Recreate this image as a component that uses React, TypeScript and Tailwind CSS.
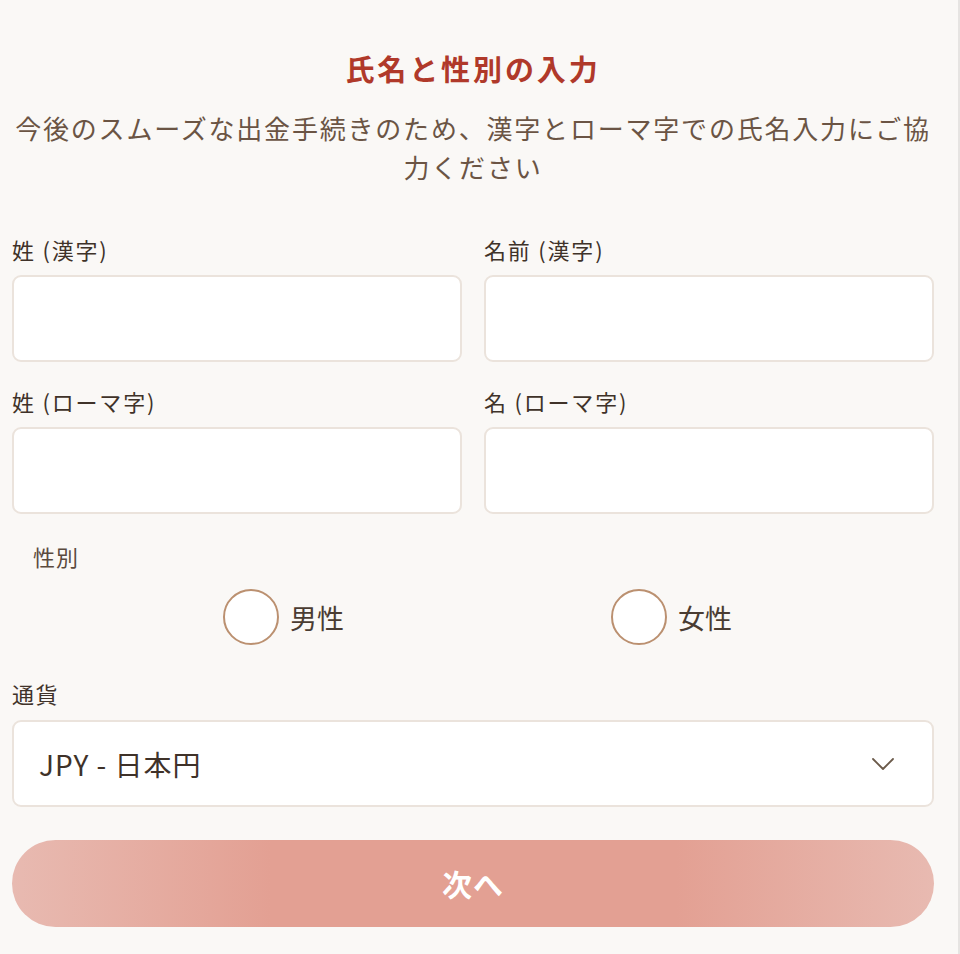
type Field = {
  label: string
}

const nameFields: Field[][] = [
  [{ label: '姓 (漢字)' }, { label: '名前 (漢字)' }],
  [{ label: '姓 (ローマ字)' }, { label: '名 (ローマ字)' }],
]

const font = { fontFamily: '"Noto Sans CJK JP", "Noto Sans", sans-serif' }

function Radio({ label }: { label: string }) {
  return (
    <label className="flex items-center gap-[11px]">
      <span className="block h-[56px] w-[56px] rounded-full border-2 border-[#bb9070] bg-white" />
      <span className="text-[27px] leading-none text-[#4a3c32]">{label}</span>
    </label>
  )
}

export default function App() {
  return (
    <div
      style={font}
      className="min-h-[954px] w-full border-r-2 border-[#e6e4e2] bg-[#faf8f6] pb-[27px] pl-[12px] pr-[24px] pt-[48px]"
    >
      <h1 className="text-center text-[29px] font-bold leading-[40px] tracking-[0.1em] text-[#b0392a]">
        氏名と性別の入力
      </h1>
      <p className="mt-[20px] text-center text-[26px] leading-[39px] tracking-[1.8px] text-[#6b5444]">
        今後のスムーズな出金手続きのため、漢字とローマ字での氏名入力にご協力ください
      </p>

      <div className="mt-[48px] flex flex-col gap-[24px]">
        {nameFields.map((row, i) => (
          <div key={i} className="grid grid-cols-2 gap-[22px]">
            {row.map((field) => (
              <div key={field.label} className="flex flex-col gap-[11px]">
                <span className="text-[22px] leading-[30px] tracking-[1.8px] text-[#3f3229]">
                  {field.label}
                </span>
                <div className="h-[87px] rounded-[9px] border-2 border-[#ebe3dc] bg-white" />
              </div>
            ))}
          </div>
        ))}
      </div>

      <div className="mt-[27px] pl-[21px] text-[22px] leading-[30px] tracking-[1px] text-[#5a4a3e]">性別</div>
      <div className="mt-[18px] flex items-center gap-[267px] pl-[211px]">
        <Radio label="男性" />
        <Radio label="女性" />
      </div>

      <div className="mt-[33px] text-[22px] leading-[30px] tracking-[1.5px] text-[#3f3229]">通貨</div>
      <div className="mt-[12px] flex h-[87px] items-center justify-between rounded-[9px] border-2 border-[#ebe3dc] bg-white pl-[25px] pr-[38px]">
        <span className="text-[28px] tracking-[1px] text-[#3f3229]">JPY - 日本円</span>
        <svg width="22" height="12" viewBox="0 0 22 12" fill="none" className="text-[#6b5a4a]">
          <path d="M1 1l10 10L21 1" stroke="currentColor" strokeWidth="1.8" strokeLinecap="round" strokeLinejoin="round" />
        </svg>
      </div>

      <button
        className="mt-[33px] flex h-[87px] w-full items-center justify-center rounded-full bg-[linear-gradient(to_right,#e8bab1_0%,#e3a093_28%,#e3a093_72%,#e8bab1_100%)] text-[30px] font-bold tracking-[1px] text-white"
      >
        次へ
      </button>
    </div>
  )
}
